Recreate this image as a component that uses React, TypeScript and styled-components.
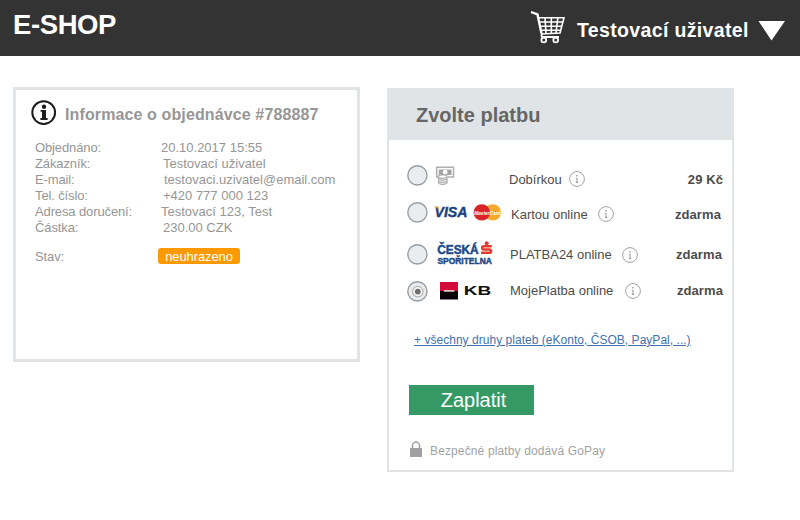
import React from 'react';
import styled, { createGlobalStyle } from 'styled-components';

const GlobalStyle = createGlobalStyle`
  * { box-sizing: border-box; }
  body {
    margin: 0;
    background: #fff;
    font-family: "Liberation Sans", Arial, sans-serif;
  }
`;

const Page = styled.div`
  width: 800px;
  height: 520px;
  overflow: hidden;
  background: #fff;
`;

const TopBar = styled.header`
  display: flex;
  align-items: flex-start;
  height: 56px;
  padding-left: 13px;
  background: #333;
  color: #fff;
  white-space: nowrap;
`;

const Brand = styled.h1`
  margin: 9px 0 0;
  width: 517px;
  font-size: 27.5px;
  line-height: 32px;
  font-weight: bold;
  letter-spacing: -0.4px;
`;

const UserName = styled.span`
  width: 181px;
  margin-top: 18px;
  margin-left: 11px;
  font-size: 19.5px;
  line-height: 24px;
  font-weight: bold;
  letter-spacing: 0.35px;
`;

const Cart = styled.svg`
  margin-top: 10px;
  flex: none;
`;

const Caret = styled.svg`
  margin-top: 21px;
  flex: none;
`;

const Main = styled.main`
  display: flex;
  align-items: flex-start;
  padding: 31px 0 0 13px;
`;

const OrderPanel = styled.section`
  width: 347px;
  height: 275px;
  border: 3px solid #e1e4e7;
  padding: 9px 0 0 15px;
  color: #969696;
  white-space: nowrap;
`;

const OrderHeading = styled.div`
  display: flex;
  align-items: center;
  height: 28px;
`;

const OrderTitle = styled.h2`
  margin: 3px 0 0 8px;
  font-size: 16px;
  line-height: 20px;
  letter-spacing: 0.12px;
`;

const Details = styled.dl`
  margin: 12px 0 0 4px;
`;

const Detail = styled.div<{ $indent?: number; $gap?: number }>`
  display: flex;
  height: 16px;
  margin-top: ${p => p.$gap ?? 0}px;
  font-size: 13px;
  line-height: 18px;
  dt {
    width: ${p => 126 + (p.$indent ?? 0)}px;
    letter-spacing: -0.12px;
  }
  dd { margin: 0; }
`;

const Status = styled.span`
  display: block;
  width: 82px;
  height: 16px;
  margin-left: -3px;
  border-radius: 3px;
  background: #ff9900;
  color: #fff;
  text-align: center;
  line-height: 18px;
  letter-spacing: -0.1px;
`;

const PaymentPanel = styled.section`
  width: 347px;
  height: 384px;
  margin: 1px 0 0 27px;
  border: 2px solid #e1e4e7;
  border-top: 0;
  white-space: nowrap;
`;

const PaymentTitle = styled.h2`
  margin: 0;
  height: 52px;
  padding-left: 27px;
  background: #e0e4e7;
  color: #666;
  font-size: 20px;
  line-height: 54px;
`;

const Methods = styled.div`
  padding: 22px 0 0 18px;
`;

const Method = styled.label<{ $gap: number; $end: number }>`
  display: flex;
  align-items: center;
  height: 26px;
  margin-bottom: ${p => p.$gap}px;
  padding-right: ${p => p.$end}px;
  color: #4c4c4c;
  font-size: 13px;
  line-height: 16px;
`;

const Radio = styled.span`
  flex: none;
  width: 21px;
  height: 21px;
  svg { display: block; }
`;

const LogoSlot = styled.span<{ $width: number }>`
  flex: none;
  width: ${p => p.$width}px;
  height: 26px;
  svg { display: block; }
`;

const MethodName = styled.span<{ $width: number; $drop: number }>`
  flex: none;
  width: ${p => p.$width}px;
  margin-top: ${p => p.$drop}px;
`;

const InfoSlot = styled.span<{ $drop: number }>`
  height: 16px;
  margin-top: ${p => p.$drop - 1}px;
  svg { display: block; }
`;

const Price = styled.strong<{ $drop: number }>`
  margin: ${p => p.$drop}px 0 0 auto;
  letter-spacing: 0.1px;
`;

const MoreLink = styled.a`
  display: block;
  width: max-content;
  margin: 28px 0 0 25px;
  color: #3f72af;
  font-size: 12px;
  line-height: 16px;
  letter-spacing: 0.03px;
  text-decoration: underline;
`;

const PayButton = styled.button`
  display: block;
  width: 125px;
  height: 30px;
  margin: 37px 0 0 20px;
  padding: 0 0 0 4px;
  border: 0;
  background: #359966;
  color: #fff;
  font: 20px/30px "Liberation Sans", Arial, sans-serif;
`;

const Secure = styled.div`
  display: flex;
  align-items: center;
  height: 18px;
  margin: 25px 0 0 21px;
  color: #a3a3a3;
  font-size: 12px;
  letter-spacing: 0.13px;
  span { margin: 3px 0 0 8px; }
`;

const CartIcon = () => (
  <Cart width="36" height="34" viewBox="0 0 36 34" fill="none" stroke="#fff" strokeWidth="1.6">
    <path d="M1 2 L7.5 4.5 L11.5 23.5" strokeWidth="2.4" />
    <path d="M8.5 7.8 H34 L30 23 L11.5 24 M9.5 12 H33 M10.5 16.2 H32 M11 20.3 H31" />
    <path d="M15 8 L16 23.5 M21.3 8 V23.5 M27.8 8 L26 23" />
    <path d="M12 23.5 Q10.5 26.8 13 27 H29" strokeWidth="1.8" />
    <circle cx="13.8" cy="30" r="2.4" strokeWidth="1.8" />
    <circle cx="25.7" cy="30" r="2.4" strokeWidth="1.8" />
  </Cart>
);

const InfoBadge = () => (
  <svg width="26" height="26" viewBox="0 0 26 26">
    <circle cx="12.7" cy="12.6" r="11.4" fill="#fff" stroke="#1d1d1d" strokeWidth="2" />
    <circle cx="13" cy="6.8" r="2.2" fill="#1d1d1d" />
    <path d="M9.6 10 H15 V18 H16.6 V20 H9.4 V18 H11 V11.8 H9.6 Z" fill="#1d1d1d" />
  </svg>
);

const InfoIcon = () => (
  <svg width="16" height="16" viewBox="0 0 16 16" fill="none" stroke="#a2a2a2">
    <circle cx="8" cy="8" r="7.4" />
    <path d="M8 4 V5.6" strokeWidth="1.5" />
    <path d="M6.8 7.2 H8 V11.4 M6.8 11.4 H9.2" strokeWidth="1.1" />
  </svg>
);

const CashLogo = () => (
  <svg width="80" height="26" viewBox="0 0 80 26" fill="none" stroke="#b0b0b0">
    <path d="M11 15 H8.7 V5.2 H25.5 V15 H20" strokeWidth="1.5" />
    <path d="M10.8 7.5 H23.5 V13 H10.8 Z" fill="#a3a3a3" stroke="none" />
    <circle cx="17.2" cy="10.2" r="2.4" fill="#fff" stroke="none" />
    <path d="M10.5 15 V21 Q14.5 24 19 21 V15" fill="#fff" strokeWidth="1.3" />
    <ellipse cx="14.7" cy="14.6" rx="4.3" ry="1.7" fill="#fff" strokeWidth="1.3" />
    <path d="M10.5 17 Q14.5 19.5 19 17 M10.5 19.2 Q14.5 21.7 19 19.2" strokeWidth="1.3" />
  </svg>
);

const CardLogo = () => (
  <svg width="80" height="26" viewBox="0 0 80 26" fontFamily="Liberation Sans, Arial, sans-serif" fontWeight="bold" fontStyle="italic">
    <text x="6.5" y="18.3" fontSize="14.5" textLength="33" lengthAdjust="spacingAndGlyphs" fill="#17417f" stroke="#17417f" strokeWidth=".4">VISA</text>
    <path d="M5.8 7.6 H9.5 Q11.2 7.8 11.5 11 Q9 8.9 5.8 7.6 Z" fill="#f0ae36" />
    <circle cx="64.8" cy="13.4" r="8.2" fill="#f6a92f" />
    <circle cx="53.8" cy="13.4" r="8.2" fill="#d9252a" />
    <path d="M59.3 7.3 A8.2 8.2 0 0 1 59.3 19.5 A8.2 8.2 0 0 0 59.3 7.3" fill="#f36b24" />
    <text x="46.2" y="15.5" fontSize="5.8" textLength="26.3" lengthAdjust="spacingAndGlyphs" fill="#fff">MasterCard</text>
  </svg>
);

const SporitelnaLogo = () => (
  <svg width="80" height="26" viewBox="0 0 80 26" fontFamily="Liberation Sans, Arial, sans-serif" fontWeight="bold">
    <g fill="#204a89" stroke="#204a89" strokeWidth=".5">
      <text x="9.2" y="12.8" fontSize="12.5" textLength="41.5" lengthAdjust="spacingAndGlyphs">ČESKÁ</text>
      <text x="9.4" y="23.4" fontSize="9.6" textLength="54.5" lengthAdjust="spacingAndGlyphs">SPOŘITELNA</text>
    </g>
    <path d="M63.8 5.3 H55.8 Q54.2 5.3 54.2 6.8 Q54.2 8.5 56 8.5 H61.4 Q63 8.5 63 10.2 Q63 11.8 61.4 11.8 H53" fill="none" stroke="#e43d30" strokeWidth="2.6" />
    <circle cx="58.7" cy="2.3" r="2" fill="#e43d30" />
  </svg>
);

const KbLogo = () => (
  <svg width="80" height="26" viewBox="0 0 80 26">
    <rect x="12" y="4" width="18" height="9" fill="#d30b3b" />
    <rect x="12" y="13" width="18" height="8.5" fill="#080006" />
    <rect x="15.8" y="12.3" width="10.6" height="1.3" fill="#fff" />
    <text x="35.8" y="17.4" fontSize="13" fontFamily="Liberation Sans, Arial, sans-serif" fontWeight="bold" textLength="27.5" lengthAdjust="spacingAndGlyphs" fill="#111">KB</text>
  </svg>
);

const RadioMark = ({ selected }: { selected?: boolean }) => (
  <svg width="21" height="21" viewBox="0 0 21 21">
    <circle cx="10.4" cy="10.4" r="9.6" fill="#e9edf0" stroke="#999da0" strokeWidth="1.4" />
    {selected && (
      <>
        <circle cx="10.8" cy="10.6" r="5.3" fill="#f7f7f7" stroke="#b2b2b2" strokeWidth="1.2" />
        <circle cx="10.8" cy="10.6" r="2.9" fill="#6c6c6c" />
      </>
    )}
  </svg>
);

const details = [
  { label: 'Objednáno:', value: '20.10.2017 15:55', indent: 0 },
  { label: 'Zákazník:', value: 'Testovací uživatel', indent: 2 },
  { label: 'E-mail:', value: 'testovaci.uzivatel@email.com', indent: 3 },
  { label: 'Tel. číslo:', value: '+420 777 000 123', indent: 2 },
  { label: 'Adresa doručení:', value: 'Testovací 123, Test', indent: 0 },
  { label: 'Částka:', value: '230.00 CZK', indent: 2 },
];

const methods = [
  { name: 'Dobírkou', price: '29 Kč', Logo: CashLogo, slot: 81, nameWidth: 60, drop: 9, gap: 11, end: 9 },
  { name: 'Kartou online', price: 'zdarma', Logo: CardLogo, slot: 83, nameWidth: 87, drop: 5, gap: 16, end: 11 },
  { name: 'PLATBA24 online', price: 'zdarma', Logo: SporitelnaLogo, slot: 82, nameWidth: 112, drop: 2, gap: 11, end: 10 },
  { name: 'MojePlatba online', price: 'zdarma', Logo: KbLogo, slot: 82, nameWidth: 115, drop: 0, gap: 0, end: 9, selected: true },
];

export default function App() {
  return (
    <Page>
      <GlobalStyle />
      <TopBar>
        <Brand>E-SHOP</Brand>
        <CartIcon />
        <UserName>Testovací uživatel</UserName>
        <Caret width="27" height="20" viewBox="0 0 27 20">
          <path d="M0.5 0 H27 L13.5 19.5 Z" fill="#fff" />
        </Caret>
      </TopBar>
      <Main>
        <OrderPanel>
          <OrderHeading>
            <InfoBadge />
            <OrderTitle>Informace o objednávce #788887</OrderTitle>
          </OrderHeading>
          <Details>
            {details.map(d => (
              <Detail key={d.label} $indent={d.indent}>
                <dt>{d.label}</dt>
                <dd>{d.value}</dd>
              </Detail>
            ))}
            <Detail $gap={13}>
              <dt>Stav:</dt>
              <dd><Status>neuhrazeno</Status></dd>
            </Detail>
          </Details>
        </OrderPanel>
        <PaymentPanel>
          <PaymentTitle>Zvolte platbu</PaymentTitle>
          <Methods>
            {methods.map(({ name, price, Logo, slot, nameWidth, drop, gap, end, selected }) => (
              <Method key={name} $gap={gap} $end={end}>
                <Radio><RadioMark selected={selected} /></Radio>
                <LogoSlot $width={slot}><Logo /></LogoSlot>
                <MethodName $width={nameWidth} $drop={drop}>{name}</MethodName>
                <InfoSlot $drop={drop}><InfoIcon /></InfoSlot>
                <Price $drop={drop}>{price}</Price>
              </Method>
            ))}
          </Methods>
          <MoreLink>+ všechny druhy plateb (eKonto, ČSOB, PayPal, ...)</MoreLink>
          <PayButton>Zaplatit</PayButton>
          <Secure>
            <svg width="12" height="16" viewBox="0 0 12 16">
              <path d="M2.5 7.5 V4.5 A3.5 3.5 0 0 1 9.5 4.5 V7.5" fill="none" stroke="#a0a0a0" strokeWidth="1.5" />
              <rect x="0" y="7" width="12" height="9" fill="#a0a0a0" />
            </svg>
            <span>Bezpečné platby dodává GoPay</span>
          </Secure>
        </PaymentPanel>
      </Main>
    </Page>
  );
}
